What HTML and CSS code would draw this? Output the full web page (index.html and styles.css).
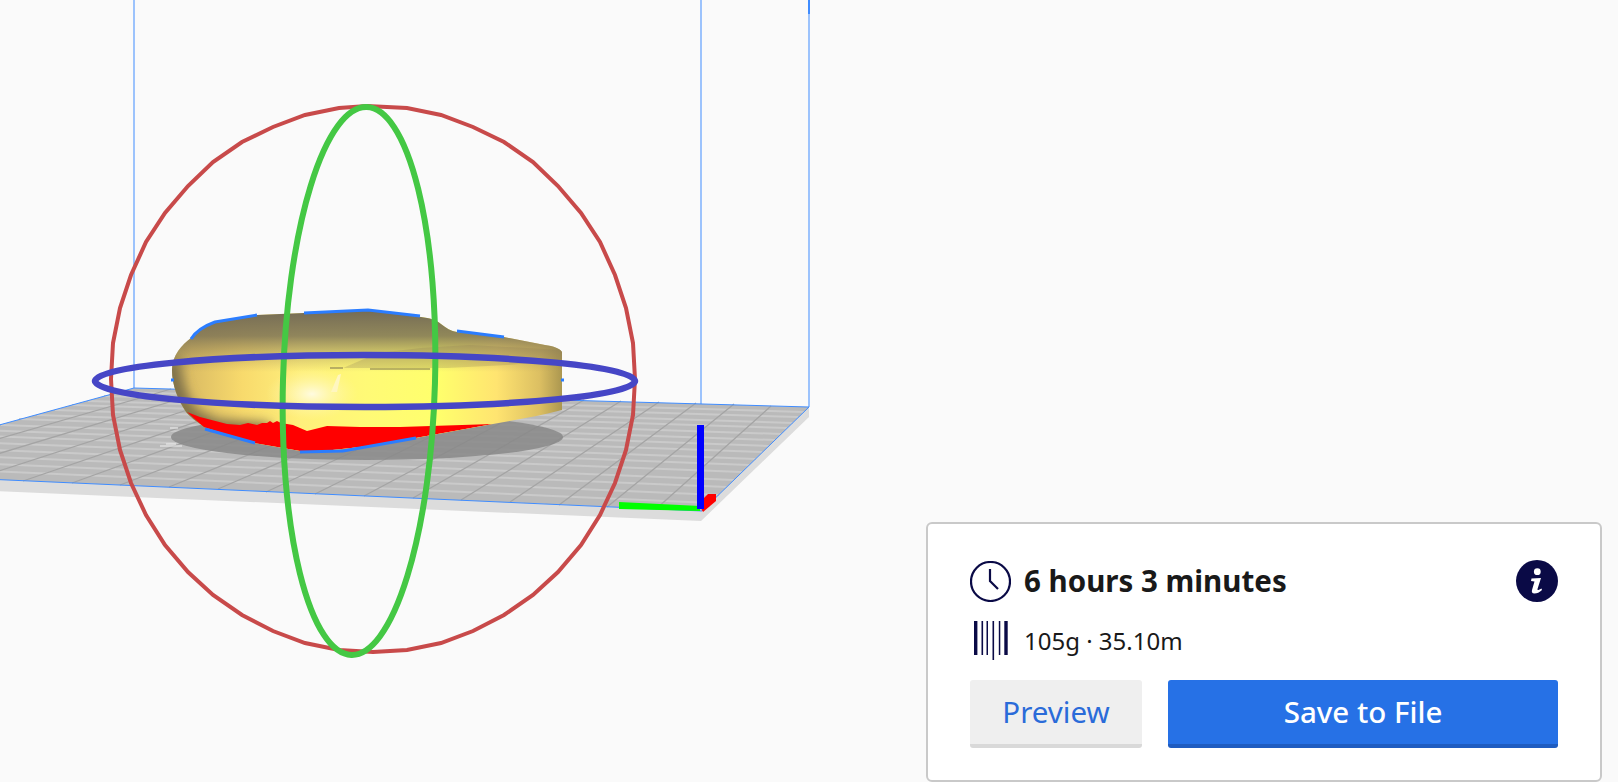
FILE: index.html
```html
<!DOCTYPE html>
<html lang="en">
<head>
<meta charset="utf-8">
<title>Print preview</title>
<link rel="stylesheet" href="styles.css">
</head>
<body>
<main class="viewport">
  <svg class="scene" viewBox="0 0 1618 782" width="1618" height="782" aria-hidden="true">
    <defs>
      <linearGradient id="bodyFill" gradientUnits="userSpaceOnUse" x1="172" y1="0" x2="563" y2="0">
        <stop offset="0" stop-color="#b5a05c"/>
        <stop offset="0.05" stop-color="#dcbd64"/>
        <stop offset="0.18" stop-color="#f8da6c"/>
        <stop offset="0.33" stop-color="#fff07c"/>
        <stop offset="0.5" stop-color="#fffa76"/>
        <stop offset="0.68" stop-color="#ffff6c"/>
        <stop offset="0.83" stop-color="#ffe470"/>
        <stop offset="0.94" stop-color="#dcbf62"/>
        <stop offset="1" stop-color="#a9954f"/>
      </linearGradient>
      <linearGradient id="topFill" gradientUnits="userSpaceOnUse" x1="0" y1="310" x2="0" y2="372">
        <stop offset="0" stop-color="#746b55" stop-opacity="1"/>
        <stop offset="0.42" stop-color="#7d7356" stop-opacity="0.85"/>
        <stop offset="1" stop-color="#a59058" stop-opacity="0"/>
      </linearGradient>
      <radialGradient id="glow">
        <stop offset="0" stop-color="#fffbe0"/>
        <stop offset="1" stop-color="#fff6a0" stop-opacity="0"/>
      </radialGradient>
      <filter id="soft" x="-30%" y="-30%" width="160%" height="160%">
        <feGaussianBlur stdDeviation="6"/>
      </filter>
      <clipPath id="bodyClip">
        <path d="M172 370 C172 355 182 345 191 338 C197 331 205 326 215 323 L257 315 L304 313 L368 310 L421 317 C430 318 436 320 441 324 C446 328 451 331 457 332 L504 337 L545 345 C553 346 561 349 562 352 L562 410 C540 416 515 420 493 424 L421 437 L379 445 L314 452 L300 451 L254 443 L204 427 C196 421 190 417 186 412 C178 400 172 385 172 370 Z"/>
      </clipPath>
    </defs>

    <!-- build volume rear edges -->
    <path class="edge" d="M134 0 V388 M701 0 V425 M809 0 V407"/>
    <path class="edge-stub" d="M809 0 V14"/>

    <!-- build plate -->
    <polygon class="plate-side" points="-172,472 702,511 809,407 809,417 701,521 -172,484"/>
    <polygon class="plate" points="134,388 809,407 702,511 -172,472"/>
    <path class="plate-row" d="M119 392 L804 412 M104 396 L798 417 M88 401 L793 423 M72 405 L787 428 M55 410 L781 434 M37 415 L775 440 M19 419 L769 446 M1 425 L762 452 M-18 430 L756 459 M-38 435 L749 465 M-58 441 L742 472 M-79 447 L734 480 M-101 453 L727 487 M-124 459 L719 495 M-148 465 L711 503"/>
    <path class="plate-col" d="M171 389 L-123 474 M209 390 L-75 476 M246 391 L-26 479 M284 392 L23 481 M321 393 L72 483 M359 394 L120 485 M396 395 L169 487 M434 396 L218 489 M471 397 L266 492 M509 398 L315 494 M546 399 L364 496 M584 400 L413 498 M621 401 L461 500 M659 402 L510 502 M696 403 L559 505 M734 404 L607 507 M771 406 L656 509"/>
    <path class="edge" d="M134 388 L809 407 L702 511 L-172 472 Z"/>

    <!-- shadow -->
    <ellipse class="shadow" cx="367" cy="437" rx="196" ry="23"/>
    <path class="specks" d="M170 428 H178 M160 446 H182 M166 444 H176"/>

    <!-- model -->
    <path d="M172 370 C172 355 182 345 191 338 C197 331 205 326 215 323 L257 315 L304 313 L368 310 L421 317 C430 318 436 320 441 324 C446 328 451 331 457 332 L504 337 L545 345 C553 346 561 349 562 352 L562 410 C540 416 515 420 493 424 L421 437 L379 445 L314 452 L300 451 L254 443 L204 427 C196 421 190 417 186 412 C178 400 172 385 172 370 Z" fill="url(#bodyFill)"/>
    <g clip-path="url(#bodyClip)">
      <rect x="170" y="305" width="395" height="70" fill="url(#topFill)"/>
      <polygon class="band" points="343,368 378,353 421,348 470,345 563,350 563,359 530,363 507,365 447,368"/>
      <path class="low-shade" d="M170 360 C172 385 178 400 190 416 L215 428 L270 432" filter="url(#soft)"/>
      <ellipse cx="312" cy="394" rx="46" ry="26" fill="url(#glow)"/>
      <polygon class="crease" points="331,392 338,375 341,374 337,392"/>
      <path class="seam" d="M330 368 H343 M370 369 H430"/>
      <polygon class="red" points="187,412 200,417 227,424 240,425 248,423 257,425 262,423 267,423 270,421 273,423 277,421 281,423 293,425 307,431 327,426 360,427 400,427 493,424 421,437 379,445 314,452 300,451 254,443 207,430"/>
    </g>
    <path class="outline" d="M191 339 C196 331 204 326 215 322 L257 315 M304 313 L368 310 L420 316 M457 331 L504 337 M205 429 L255 443 M300 452 L343 451 L416 438"/>
    <path class="outline" d="M171 380 H174 M561 380 H564"/>

    <!-- rotation gizmo -->
    <polygon class="ring-red" points="635,379 633,415 626,450 615,483 600,515 581,545 558,572 533,595 504,615 473,631 441,643 407,650 373,652 339,650 305,643 273,631 242,615 213,595 188,572 165,545 146,515 131,483 120,450 113,415 111,379 113,343 120,308 131,275 146,242 165,213 188,186 213,162 242,142 273,127 305,115 339,108 367,106 407,108 441,115 473,127 504,142 533,162 558,186 581,213 600,242 615,275 626,308 633,343"/>
    <ellipse class="ring-green" cx="359" cy="381" rx="76" ry="274" transform="rotate(1.6 359 381)"/>
    <ellipse class="ring-blue" cx="365" cy="381" rx="270" ry="26"/>

    <!-- axes -->
    <polygon class="axis-green" points="619,502 700,506 700,511 619,509"/>
    <polygon class="axis-red" points="704,498 708,494 716,494 716,501 703,512 701,508"/>
    <rect class="axis-blue" x="697" y="425" width="7" height="84"/>
  </svg>

  <section class="panel">
    <div class="row time-row">
      <svg class="icon-clock" viewBox="0 0 41 41" width="41" height="41" aria-hidden="true">
        <circle cx="20.5" cy="20.5" r="19.5"/>
        <path d="M20 8 V20 L28 28"/>
      </svg>
      <h1 class="time">6 hours 3 minutes</h1>
      <svg class="icon-info" viewBox="0 0 42 42" width="42" height="42" aria-hidden="true">
        <circle class="info-disc" cx="21" cy="21" r="21"/>
        <circle class="info-mark" cx="21.3" cy="11.7" r="3.4"/>
        <path class="info-mark" d="M15.5 18.5 L25 18 L21.5 29 C21.3 30 22 30.3 23 29.8 L25.5 28.5 L26 30 C23.5 32.5 21 33.5 18.5 33.5 C16 33.5 15.5 32 16 30 L18.5 21.5 L15 21 Z"/>
      </svg>
    </div>
    <div class="row material-row">
      <span class="icon-slot">
        <svg class="icon-spool" viewBox="0 0 34 39" width="34" height="39" aria-hidden="true">
          <rect x="0" y="0" width="3.4" height="34"/>
          <rect x="7.5" y="0" width="1.6" height="34"/>
          <rect x="12.5" y="0" width="1.5" height="34"/>
          <rect x="18.5" y="0" width="1.6" height="39"/>
          <rect x="24.8" y="0" width="1.5" height="34"/>
          <rect x="30.3" y="0" width="3.4" height="34"/>
        </svg>
      </span>
      <span class="material">105g · 35.10m</span>
    </div>
    <div class="actions">
      <button class="btn btn-secondary" type="button">Preview</button>
      <button class="btn btn-primary" type="button">Save to File</button>
    </div>
  </section>
</main>
</body>
</html>
```
FILE: styles.css
```css
* { box-sizing: border-box; }

html, body {
  margin: 0;
  padding: 0;
  width: 1618px;
  height: 782px;
  overflow: hidden;
  background: #fafafa;
  font-family: "Noto Sans", "Open Sans", sans-serif;
}

.viewport {
  position: relative;
  width: 1618px;
  height: 782px;
  overflow: hidden;
  background: #fafafa;
}

.scene { display: block; }

.edge { fill: none; stroke: #3f8cff; stroke-width: 1; }
.edge-stub { fill: none; stroke: #3f8cff; stroke-width: 2; }
.plate { fill: #bababa; }
.plate-side { fill: #dcdcdc; }
.plate-row { fill: none; stroke: #cacaca; stroke-width: 2; }
.plate-col { fill: none; stroke: #a4a4a4; stroke-width: 1.3; }
.shadow { fill: #888888; fill-opacity: 0.85; }
.specks { fill: none; stroke: #f0f0f0; stroke-width: 1; }
.band { fill: #8a7c58; fill-opacity: 0.25; }
.low-shade { fill: none; stroke: #7e6f48; stroke-width: 18; }
.crease { fill: #fff6c0; }
.seam { fill: none; stroke: #7d7350; stroke-width: 1.2; }
.red { fill: #ff0000; }
.outline { fill: none; stroke: #2b7dff; stroke-width: 3; }

.ring-red { fill: none; stroke: #c84a4a; stroke-width: 4; }
.ring-green { fill: none; stroke: #44c844; stroke-width: 6; }
.ring-blue { fill: none; stroke: #4646c6; stroke-width: 6.5; }

.axis-green { fill: #00ff00; }
.axis-red { fill: #ff0000; }
.axis-blue { fill: #0000ff; }

.panel {
  position: absolute;
  left: 926px;
  top: 522px;
  width: 676px;
  height: 260px;
  padding: 36px 42px 32px;
  display: flex;
  flex-direction: column;
  background: #ffffff;
  border: 2px solid #c9c9c9;
  border-radius: 6px;
}

.row { display: flex; align-items: center; }

.time-row { height: 42px; }
.material-row { height: 39px; margin-top: 19px; }

.icon-clock { flex: none; margin-right: 13px; }
.icon-clock circle, .icon-clock path { fill: none; stroke: #0a0a46; stroke-width: 2.2; }

.time {
  margin: 0;
  flex: 1;
  font-size: 29.5px;
  font-weight: 700;
  line-height: 42px;
  color: #191919;
}

.icon-info { flex: none; }
.info-disc { fill: #0a0a46; }
.info-mark { fill: #ffffff; }

.icon-slot {
  flex: none;
  width: 54px;
  padding-left: 4px;
  display: flex;
}
.icon-spool { display: block; fill: #0a0a46; }

.material {
  font-size: 24px;
  line-height: 39px;
  color: #191919;
}

.actions {
  display: flex;
  gap: 26px;
  margin-top: 20px;
  height: 68px;
}

.btn {
  margin: 0;
  padding: 0;
  border: 0;
  border-bottom: 4px solid;
  border-radius: 3px;
  font-family: inherit;
  font-size: 29.5px;
  line-height: 1;
}

.btn-secondary {
  width: 172px;
  font-weight: 400;
  background: #efefef;
  border-bottom-color: #d9d9d9;
  color: #2a6bd9;
}

.btn-primary {
  flex: 1;
  font-weight: 500;
  background: #2671e6;
  border-bottom-color: #1f5cc0;
  color: #ffffff;
}
```
